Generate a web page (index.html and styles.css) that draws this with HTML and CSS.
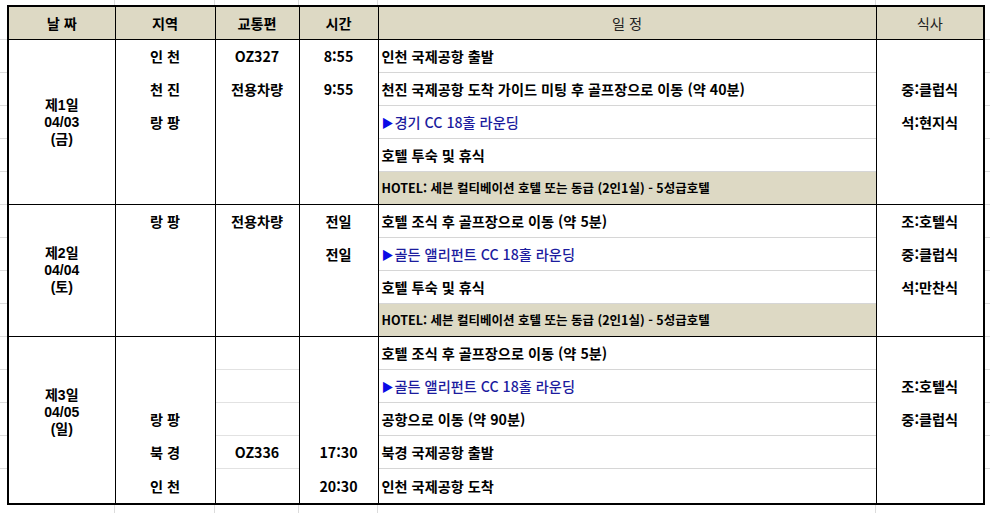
FILE: index.html
```html
<!DOCTYPE html>
<html lang="ko">
<head>
<meta charset="utf-8">
<title>골프 일정표</title>
<link rel="stylesheet" href="styles.css">
</head>
<body>
<div class="sheet">
<table class="itin">
  <colgroup>
    <col class="c-date"><col class="c-region"><col class="c-trans"><col class="c-time"><col class="c-plan"><col class="c-meal">
  </colgroup>
  <thead>
    <tr class="head">
      <th class="strong">날 짜</th>
      <th class="strong">지역</th>
      <th class="strong">교통편</th>
      <th class="strong">시간</th>
      <th>일 정</th>
      <th>식사</th>
    </tr>
  </thead>
  <tbody class="day">
    <tr>
      <td class="date" rowspan="5"><span class="dl">제1일</span><span class="dl">04/03</span><span class="dl">(금)</span></td>
      <td>인 천</td><td>OZ327</td><td>8:55</td>
      <td class="plan">인천 국제공항 출발</td><td class="meal"></td>
    </tr>
    <tr>
      <td>천 진</td><td>전용차량</td><td>9:55</td>
      <td class="plan">천진 국제공항 도착 가이드 미팅 후 골프장으로 이동 (약 40분)</td><td class="meal">중:클럽식</td>
    </tr>
    <tr>
      <td>랑 팡</td><td></td><td></td>
      <td class="plan golf"><span class="tri">▶</span>경기 CC 18홀 라운딩</td><td class="meal">석:현지식</td>
    </tr>
    <tr>
      <td></td><td></td><td></td>
      <td class="plan">호텔 투숙 및 휴식</td><td class="meal"></td>
    </tr>
    <tr>
      <td></td><td></td><td></td>
      <td class="plan hotel">HOTEL: 세븐 컬티베이션 호텔 또는 동급 (2인1실) - 5성급호텔</td><td class="meal"></td>
    </tr>
  </tbody>
  <tbody class="day">
    <tr>
      <td class="date" rowspan="4"><span class="dl">제2일</span><span class="dl">04/04</span><span class="dl">(토)</span></td>
      <td>랑 팡</td><td>전용차량</td><td>전일</td>
      <td class="plan">호텔 조식 후 골프장으로 이동 (약 5분)</td><td class="meal">조:호텔식</td>
    </tr>
    <tr>
      <td></td><td></td><td>전일</td>
      <td class="plan golf"><span class="tri">▶</span>골든 앨리펀트 CC 18홀 라운딩</td><td class="meal">중:클럽식</td>
    </tr>
    <tr>
      <td></td><td></td><td></td>
      <td class="plan">호텔 투숙 및 휴식</td><td class="meal">석:만찬식</td>
    </tr>
    <tr>
      <td></td><td></td><td></td>
      <td class="plan hotel">HOTEL: 세븐 컬티베이션 호텔 또는 동급 (2인1실) - 5성급호텔</td><td class="meal"></td>
    </tr>
  </tbody>
  <tbody class="day day3">
    <tr>
      <td class="date late" rowspan="5"><span class="dl">제3일</span><span class="dl">04/05</span><span class="dl">(일)</span></td>
      <td></td><td class="grid"></td><td></td>
      <td class="plan">호텔 조식 후 골프장으로 이동 (약 5분)</td><td class="meal"></td>
    </tr>
    <tr>
      <td></td><td class="grid"></td><td></td>
      <td class="plan golf"><span class="tri">▶</span>골든 앨리펀트 CC 18홀 라운딩</td><td class="meal">조:호텔식</td>
    </tr>
    <tr>
      <td>랑 팡</td><td class="grid"></td><td></td>
      <td class="plan">공항으로 이동 (약 90분)</td><td class="meal">중:클럽식</td>
    </tr>
    <tr>
      <td>북 경</td><td class="grid">OZ336</td><td>17:30</td>
      <td class="plan">북경 국제공항 출발</td><td class="meal"></td>
    </tr>
    <tr class="last">
      <td>인 천</td><td class="grid"></td><td>20:30</td>
      <td class="plan">인천 국제공항 도착</td><td class="meal"></td>
    </tr>
  </tbody>
</table>
</div>
</body>
</html>
```
FILE: styles.css
```css
html, body {
  margin: 0;
  padding: 0;
  background: #fff;
}

.sheet {
  width: 990px;
  height: 513px;
  box-sizing: border-box;
  padding: 5px 0 0 7px;
  overflow: hidden;
  background:
    linear-gradient(#dcdcdc, #dcdcdc) 114px 0 / 1px 100% no-repeat,
    linear-gradient(#dcdcdc, #dcdcdc) 214px 0 / 1px 100% no-repeat,
    linear-gradient(#dcdcdc, #dcdcdc) 298px 0 / 1px 100% no-repeat,
    linear-gradient(#dcdcdc, #dcdcdc) 377px 0 / 1px 100% no-repeat,
    linear-gradient(#dcdcdc, #dcdcdc) 875px 0 / 1px 100% no-repeat,
    repeating-linear-gradient(to bottom, transparent 0 32px, #dcdcdc 32px 33px) 0 7px / 100% 462px no-repeat,
    #fff;
  font-family: "Noto Sans CJK KR", "Malgun Gothic", "Noto Sans", sans-serif;
  color: #000;
}

.itin {
  border-collapse: collapse;
  table-layout: fixed;
  width: 978px;
  border: 2px solid #000;
  background: #fff;
  font-size: 14.2px;
}

.c-date { width: 107px; }
.c-region { width: 100px; }
.c-trans { width: 84px; }
.c-time { width: 79px; }
.c-plan { width: 498px; }
.c-meal { width: 108px; }

.itin th,
.itin td {
  padding: 0;
  text-align: center;
  vertical-align: middle;
  white-space: nowrap;
  border-left: 1px solid #000;
  border-right: 1px solid #000;
  line-height: 18px;
  font-weight: 700;
}

.head th {
  height: 32px;
  background: #ddd9c4;
  font-weight: 400;
  color: #222;
  border-bottom: 1px solid #000;
}
.head th.strong {
  font-weight: 700;
  color: #000;
}

.day tr { height: 33px; }
.day tr.last { height: 35px; }

.day tr:first-child td {
  border-top: 1px solid #000;
}

.dl {
  display: block;
  height: 17px;
  line-height: 17px;
  font-size: 14px;
  font-weight: 700;
  font-family: "Liberation Sans", "Noto Sans CJK KR", sans-serif;
}
.date.late {
  padding-bottom: 14px;
}

.plan {
  text-align: left !important;
  padding-left: 3px !important;
  border-top: 1px solid #d6d6d6;
}

.golf {
  color: #1c1c9e;
  font-weight: 500 !important;
}
.tri {
  color: #0a0ae6;
  font-size: 12px;
  margin-right: 1px;
}

.hotel {
  background: #ddd9c4;
  font-size: 12.5px;
}

.meal {
  font-weight: 700;
}

.day3 .grid {
  border-top: 1px solid #e2e2e2;
}
.day3 tr:first-child .grid {
  border-top: 1px solid #000;
}
```
